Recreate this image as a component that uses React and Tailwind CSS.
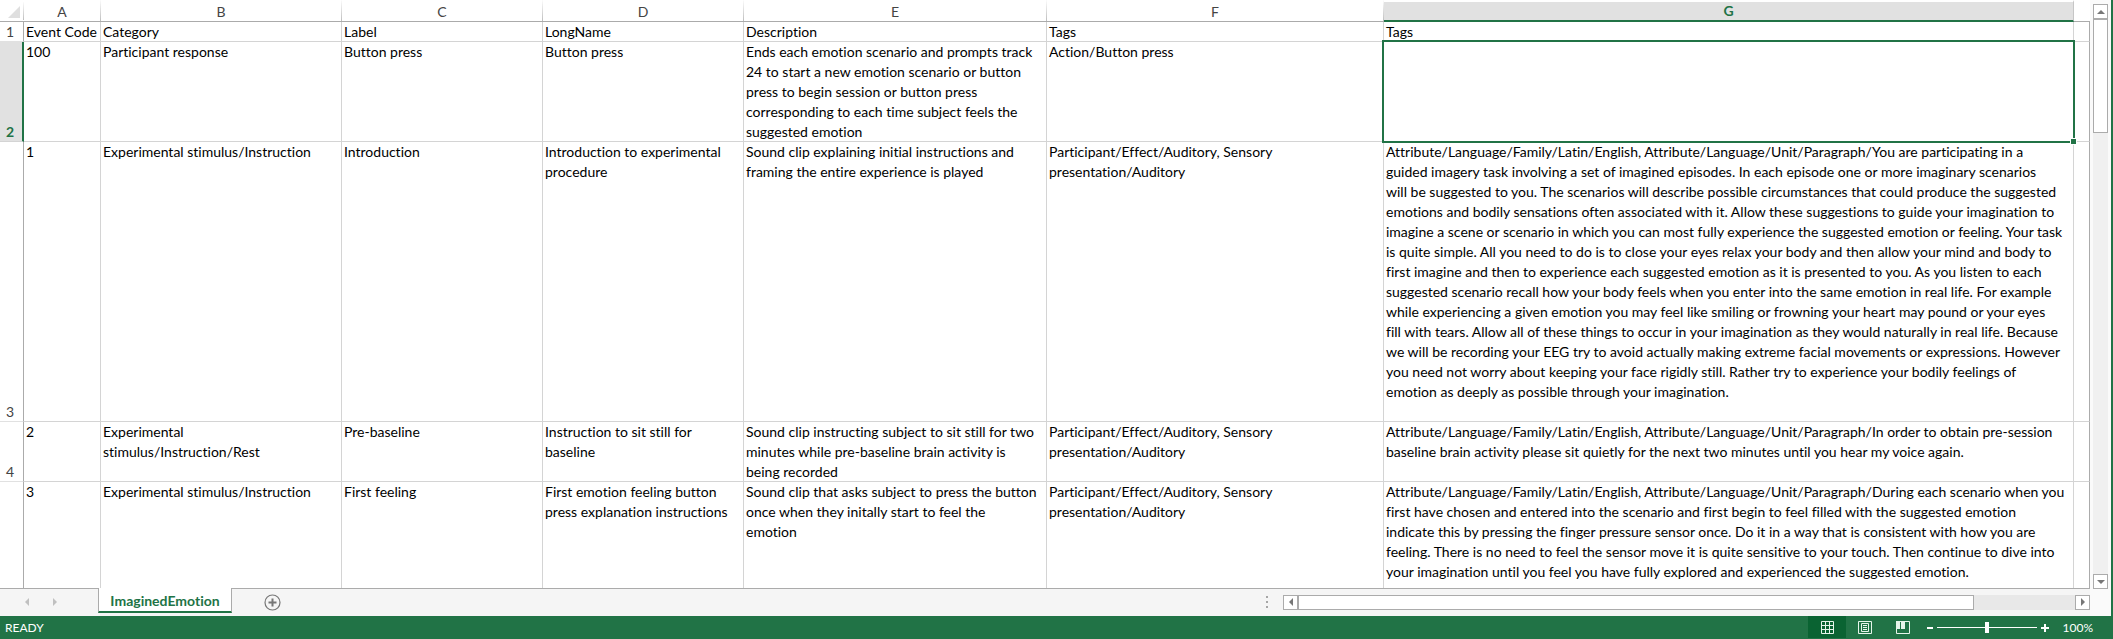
const COLUMNS = [
  { name: "A", width: "w-[77px]" },
  { name: "B", width: "w-[241px]" },
  { name: "C", width: "w-[201px]" },
  { name: "D", width: "w-[201px]" },
  { name: "E", width: "w-[303px]" },
  { name: "F", width: "w-[337px]" },
  { name: "G", width: "" },
];

const ROWS = [
  {
    number: "1",
    height: "h-5",
    cells: ["Event Code", "Category", "Label", "LongName", "Description", "Tags", "Tags"],
  },
  {
    number: "2",
    height: "h-[100px]",
    cells: [
      "100",
      "Participant response",
      "Button press",
      "Button press",
      "Ends each emotion scenario and prompts track\n24 to start a new emotion scenario or button\npress to begin session or button press\ncorresponding to each time subject feels the\nsuggested emotion",
      "Action/Button press",
      "",
    ],
  },
  {
    number: "3",
    height: "h-[280px]",
    cells: [
      "1",
      "Experimental stimulus/Instruction",
      "Introduction",
      "Introduction to experimental\nprocedure",
      "Sound clip explaining initial instructions and\nframing the entire experience is played",
      "Participant/Effect/Auditory, Sensory\npresentation/Auditory",
      "Attribute/Language/Family/Latin/English, Attribute/Language/Unit/Paragraph/You are participating in a\nguided imagery task involving a set of imagined episodes. In each episode one or more imaginary scenarios\nwill be suggested to you. The scenarios will describe possible circumstances that could produce the suggested\nemotions and bodily sensations often associated with it. Allow these suggestions to guide your imagination to\nimagine a scene or scenario in which you can most fully experience the suggested emotion or feeling. Your task\nis quite simple. All you need to do is to close your eyes relax your body and then allow your mind and body to\nfirst imagine and then to experience each suggested emotion as it is presented to you. As you listen to each\nsuggested scenario recall how your body feels when you enter into the same emotion in real life. For example\nwhile experiencing a given emotion you may feel like smiling or frowning your heart may pound or your eyes\nfill with tears. Allow all of these things to occur in your imagination as they would naturally in real life. Because\nwe will be recording your EEG try to avoid actually making extreme facial movements or expressions. However\nyou need not worry about keeping your face rigidly still. Rather try to experience your bodily feelings of\nemotion as deeply as possible through your imagination.",
    ],
  },
  {
    number: "4",
    height: "h-[60px]",
    cells: [
      "2",
      "Experimental\nstimulus/Instruction/Rest",
      "Pre-baseline",
      "Instruction to sit still for\nbaseline",
      "Sound clip instructing subject to sit still for two\nminutes while pre-baseline brain activity is\nbeing recorded",
      "Participant/Effect/Auditory, Sensory\npresentation/Auditory",
      "Attribute/Language/Family/Latin/English, Attribute/Language/Unit/Paragraph/In order to obtain pre-session\nbaseline brain activity please sit quietly for the next two minutes until you hear my voice again.",
    ],
  },
  {
    number: "",
    height: "h-[120px]",
    cells: [
      "3",
      "Experimental stimulus/Instruction",
      "First feeling",
      "First emotion feeling button\npress explanation instructions",
      "Sound clip that asks subject to press the button\nonce when they initally start to feel the\nemotion",
      "Participant/Effect/Auditory, Sensory\npresentation/Auditory",
      "Attribute/Language/Family/Latin/English, Attribute/Language/Unit/Paragraph/During each scenario when you\nfirst have chosen and entered into the scenario and first begin to feel filled with the suggested emotion\nindicate this by pressing the finger pressure sensor once. Do it in a way that is consistent with how you are\nfeeling. There is no need to feel the sensor move it is quite sensitive to your touch. Then continue to dive into\nyour imagination until you feel you have fully explored and experienced the suggested emotion.",
    ],
  },
];

function Arrow({ points }) {
  return (
    <svg viewBox="0 0 8 8" className="size-2" fill="currentColor" aria-hidden="true">
      <polygon points={points} />
    </svg>
  );
}

const UP = "4,2 8,6 0,6";
const DOWN = "0,2 8,2 4,6";
const LEFT = "6,0 6,8 2,4";
const RIGHT = "2,0 6,4 2,8";

function ScrollButton({ label, points }) {
  return (
    <button
      type="button"
      aria-label={label}
      className="flex size-[15px] shrink-0 items-center justify-center border border-[#ababab] bg-white text-[#777]"
    >
      <Arrow points={points} />
    </button>
  );
}

function ColumnHeader({ column }) {
  if (column.name === "G") {
    return (
      <th scope="col" className="border-t-2 border-r border-b-2 border-t-white border-r-[#c6c6c6] border-b-[#217346] bg-[#e1e1e1] p-0 text-center font-bold leading-[18px] text-[#217346]">
        G
      </th>
    );
  }
  return (
    <th scope="col" className="border-b border-b-[#ababab] p-0 font-normal text-[#444]">
      <span className="block border-r pt-0.5 text-center leading-[19px] [border-image:linear-gradient(#fff,#bbb)_1]">
        {column.name}
      </span>
    </th>
  );
}

function Sheet() {
  return (
    <table className="w-full table-fixed border-separate border-spacing-0">
      <colgroup>
        <col className="w-6" />
        {COLUMNS.map((c) => (
          <col key={c.name} className={c.width} />
        ))}
        <col className="w-4" />
      </colgroup>
      <thead>
        <tr className="h-[22px]">
          <td className="border-b border-b-[#ababab] p-0">
            <span className="flex justify-end border-r pr-[3px] pt-1 pb-0.5 [border-image:linear-gradient(#fff,#bbb)_1]">
              <svg viewBox="0 0 12 12" className="size-3" aria-hidden="true">
                <polygon points="12,0 12,12 0,12" fill="#dfdfdf" />
              </svg>
            </span>
          </td>
          {COLUMNS.map((c) => (
            <ColumnHeader key={c.name} column={c} />
          ))}
          <td className="border-b border-b-[#ababab] p-0" />
        </tr>
      </thead>
      <tbody>
        {ROWS.map((row, r) => {
          const active = r === 1;
          return (
            <tr key={r} className={row.height}>
              <th
                scope="row"
                className={
                  active
                    ? "border-r-2 border-b border-r-[#217346] border-b-[#d4d4d4] bg-[#e1e1e1] p-0 pr-0.5 text-center align-bottom font-bold leading-[18px] text-[#217346]"
                    : "border-r border-b border-r-[#ababab] border-b-[#e1e1e1] p-0 pr-[3px] text-center align-bottom font-normal leading-[18px] text-[#444]"
                }
              >
                {row.number}
              </th>
              {row.cells.map((text, c) => (
                <td
                  key={c}
                  className="relative border-r border-b border-[#d4d4d4] p-0 pl-0.5 align-top"
                >
                  <div className="-mb-px whitespace-pre">{text}</div>
                  {active && c === 6 && (
                    <div className="absolute -top-0.5 -right-0.5 -bottom-0.5 -left-0.5 z-10 border-2 border-[#217346]">
                      <span className="absolute -right-1 -bottom-1 size-[7px] border border-white bg-[#217346]" />
                    </div>
                  )}
                </td>
              ))}
              <td className="border-r border-b border-r-[#ababab] border-b-[#d4d4d4] p-0" />
            </tr>
          );
        })}
      </tbody>
    </table>
  );
}

function TabBar() {
  return (
    <div className="flex h-7 shrink-0 border-t border-[#ababab] bg-[#f5f5f5]">
      <div className="flex w-[98px] items-center gap-5 pb-0.5 pl-[23px] text-[#c0c0c0]">
        <button type="button" aria-label="Previous sheet" className="flex">
          <Arrow points={LEFT} />
        </button>
        <button type="button" aria-label="Next sheet" className="flex">
          <Arrow points={RIGHT} />
        </button>
      </div>
      <button
        type="button"
        className="-mt-px mb-[3px] w-[134px] border-x border-b-2 border-x-[#ababab] border-b-[#217346] bg-white pt-0.5 font-bold text-[#217346]"
      >
        ImaginedEmotion
      </button>
      <button type="button" aria-label="New sheet" className="ml-8 flex items-center pb-px text-[#777]">
        <svg viewBox="0 0 17 17" className="size-[17px]" fill="none" stroke="currentColor" aria-hidden="true">
          <circle cx="8.5" cy="8.5" r="7.5" strokeWidth="1.2" />
          <path d="M8.5 4.5v8M4.5 8.5h8" strokeWidth="2" />
        </svg>
      </button>
      <div className="flex flex-1 items-center justify-end pb-px">
        <svg viewBox="0 0 2 12" className="mr-[15px] h-3 w-0.5" fill="#a6a6a6" aria-hidden="true">
          <path d="M0 0h2v2H0zM0 5h2v2H0zM0 10h2v2H0z" />
        </svg>
        <div className="flex w-[807px] bg-[#e8e8e8]">
          <ScrollButton label="Scroll left" points={LEFT} />
          <div className="flex flex-1">
            <div className="w-[87%] border border-[#ababab] bg-white" />
          </div>
          <ScrollButton label="Scroll right" points={RIGHT} />
        </div>
      </div>
    </div>
  );
}

function StatusBar() {
  return (
    <footer className="flex h-[23px] shrink-0 items-center bg-[#217346] pr-[18px] text-[12px] leading-4 text-white">
      <span className="flex-1 pl-[5px]">READY</span>
      <button type="button" aria-label="Normal view" className="flex h-[22px] w-[38px] items-center justify-center self-start bg-[#0a6332]">
        <svg viewBox="0 0 13 13" className="size-[13px]" fill="none" stroke="#e6f5ea" aria-hidden="true">
          <path d="M.5.5h12v12H.5zM4.500.5v12M8.500.5v12M.5 4.500h12M.5 8.500h12" />
        </svg>
      </button>
      <button type="button" aria-label="Page layout view" className="flex h-[22px] w-[38px] items-center justify-center self-start">
        <svg viewBox="0 0 14 13" className="h-[13px] w-3.5" fill="none" stroke="#e6f5ea" aria-hidden="true">
          <path d="M.5.5h13v12H.5zM3.500 2.500h7v8h-7zM5 4.500h4M5 6.500h4M5 8.500h4" />
        </svg>
      </button>
      <button type="button" aria-label="Page break preview" className="flex h-[22px] w-[38px] items-center justify-center self-start">
        <svg viewBox="0 0 14 13" className="h-[13px] w-3.5" fill="none" aria-hidden="true">
          <path d="M.5.5h13v12H.5z" stroke="#e6f5ea" />
          <path d="M0 0h4v8H0zM5 0h4v8H5z" fill="#e6f5ea" />
        </svg>
      </button>
      <button type="button" aria-label="Zoom out" className="ml-[5px] flex">
        <svg viewBox="0 0 6 8" className="h-2 w-1.5" aria-hidden="true">
          <path d="M0 3h6v2H0z" fill="#fff" />
        </svg>
      </button>
      <input
        type="range"
        aria-label="Zoom"
        min="10"
        max="190"
        defaultValue="100"
        className="mx-1 h-[11px] w-[100px] appearance-none bg-transparent [&::-webkit-slider-runnable-track]:h-px [&::-webkit-slider-runnable-track]:bg-white [&::-webkit-slider-thumb]:-mt-[5px] [&::-webkit-slider-thumb]:h-[11px] [&::-webkit-slider-thumb]:w-1 [&::-webkit-slider-thumb]:appearance-none [&::-webkit-slider-thumb]:bg-white"
      />
      <button type="button" aria-label="Zoom in" className="flex">
        <svg viewBox="0 0 8 8" className="size-2" aria-hidden="true">
          <path d="M0 3h3V0h2v3h3v2H5v3H3V5H0z" fill="#fff" />
        </svg>
      </button>
      <span className="w-[44px] text-right">100%</span>
    </footer>
  );
}

export default function App() {
  return (
    <div className="flex h-screen flex-col overflow-hidden border-r-2 border-[#217346] bg-white font-['Lato',sans-serif] text-[14px] leading-5 text-black [font-variant-ligatures:none]">
      <div className="flex min-h-0 flex-1">
        <main className="flex min-w-0 flex-1 flex-col">
          <div className="min-h-0 flex-1 overflow-hidden">
            <Sheet />
          </div>
          <TabBar />
        </main>
        <div className="flex w-[21px] flex-col items-center bg-[#fafafa] pt-1 pb-[27px]">
          <ScrollButton label="Scroll up" points={UP} />
          <div className="flex w-[15px] flex-1 flex-col bg-[#f0f0f0]">
            <div className="h-[114px] border border-[#ababab] bg-white" />
          </div>
          <ScrollButton label="Scroll down" points={DOWN} />
        </div>
      </div>
      <StatusBar />
    </div>
  );
}
